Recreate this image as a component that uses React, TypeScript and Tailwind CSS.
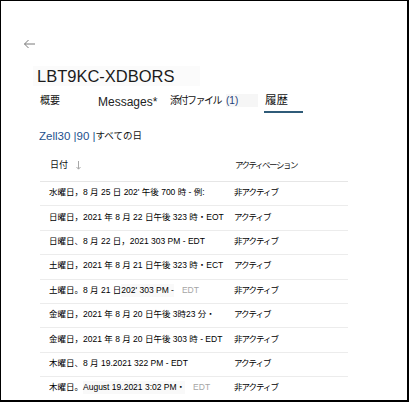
import React from "react";

type Seg = { t: string; gray?: boolean; shade?: boolean; gap?: number };

const rows: { date: Seg[]; status: string }[] = [
  { date: [{ t: "水曜日，8 月 25 日 202' 午後 700 時 - 例:" }], status: "非アクティブ" },
  { date: [{ t: "日曜日，2021 年 8 月 22 日午後 323 時・EOT" }], status: "アクティブ" },
  { date: [{ t: "日曜日、8 月 22 日，2021 303 PM - EDT" }], status: "非アクティブ" },
  { date: [{ t: "土曜日，2021 年 8 月 21 日午後 323 時・ECT" }], status: "アクティブ" },
  {
    date: [
      { t: "土曜日。8 月 21 日 " },
      { t: "202' 303 PM -", shade: true },
      { t: "EDT", gray: true, gap: 8 },
    ],
    status: "非アクティブ",
  },
  { date: [{ t: "金曜日，2021 年 8 月 20 日午後 3時23 分・" }], status: "アクティブ" },
  { date: [{ t: "金曜日，2021 年 8 月 20 日午後 303 時 - EDT" }], status: "非アクティブ" },
  { date: [{ t: "木曜日、8 月 19.2021 322 PM - EDT" }], status: "アクティブ" },
  {
    date: [
      { t: "木曜日。" },
      { t: "August 19.2021 3:02 PM・", shade: true },
      { t: "EDT", gray: true, gap: 8 },
    ],
    status: "非アクティブ",
  },
];

export default function App() {
  return (
    <div className="w-[409px] h-[402px] overflow-hidden bg-white border-l border-t border-r-2 border-b-2 border-black font-['Liberation_Sans','Noto_Sans_CJK_JP',sans-serif] text-[#111]">
      <div className="flex flex-col">
        {/* back arrow */}
        <div className="mt-[38px] ml-[22px] h-[10px]">
          <svg width="13" height="10" viewBox="0 0 13 10" fill="none">
            <path d="M12 5H1.5M5.5 1L1.5 5L5.5 9" stroke="#7a7a7a" strokeWidth="1" />
          </svg>
        </div>

        {/* title */}
        <div className="mt-[17px] ml-[32px] w-[167px] h-[20px] bg-[#fbfbfb] pl-[4px] text-[16.5px] leading-[20px] text-[#1b1b1b]">
          LBT9KC-XDBORS
        </div>

        {/* tabs */}
        <div className="flex h-[28px] items-stretch">
          <div className="ml-[39px] w-[58px] pt-[8px]">
            <div className="h-[13px] leading-[13px] text-[10px]">概要</div>
          </div>
          <div className="w-[72px] pt-[10px]">
            <div className="h-[13px] leading-[13px] text-[12px] text-[#222]">Messages*</div>
          </div>
          <div className="w-[94px] pt-[8px]">
            <div className="h-[13px] leading-[13px] text-[10px] flex items-center">
              <span className="tracking-[-1.5px]">添付ファイル</span>
              <span className="ml-[5px] bg-[#f6f6f6] pr-[20px] text-[10px] text-[#1d3f7a]">(1)</span>
            </div>
          </div>
          <div className="w-[39px] flex flex-col pt-[7px]">
            <div className="pl-[1px] h-[14px] leading-[14px] text-[11.5px]">履歴</div>
            <div className="mt-auto mb-[1px] h-[2px] bg-[#2f5b78]" />
          </div>
        </div>

        {/* filter */}
        <div className="mt-[14px] ml-[38px] h-[16px] leading-[16px] flex items-center">
          <span className="text-[11.5px] text-[#1d4f8c]">Zell30 |90 |</span>
          <span className="text-[9.5px]">すべての日</span>
        </div>

        {/* table */}
        <div className="ml-[39px] w-[308px] mt-[9px] flex flex-col">
          <div className="h-[29px] flex items-center pb-[3px] border-b border-[#e6e6e6]">
            <div className="w-[194px] pl-[10px] flex items-center">
              <span className="text-[9px]">日付</span>
              <svg className="ml-[8px]" width="5" height="9" viewBox="0 0 5 9" fill="none">
                <path d="M2.5 0V8M0.5 6L2.5 8.2L4.5 6" stroke="#a8a8a8" strokeWidth="1" />
              </svg>
            </div>
            <div className="text-[8.5px] tracking-[-1.5px] pl-[1px]">アクティベーション</div>
          </div>
          {rows.map((r, i) => (
            <div
              key={i}
              className="h-[24.4px] shrink-0 flex items-center pb-[2px] border-b border-[#ececec]"
            >
              <div className="w-[194px] pl-[9px] flex items-center whitespace-nowrap text-[8.5px] text-black">
                {r.date.map((s, j) => (
                  <span
                    key={j}
                    style={s.gap ? { marginLeft: s.gap } : undefined}
                    className={
                      s.gray
                        ? "text-[#a5a5a5]"
                        : s.shade
                        ? "bg-[#f9f9f9]"
                        : ""
                    }
                  >
                    {s.t}
                  </span>
                ))}
              </div>
              <div className="text-[8.5px] tracking-[-1px] text-black">{r.status}</div>
            </div>
          ))}
        </div>
      </div>
    </div>
  );
}
